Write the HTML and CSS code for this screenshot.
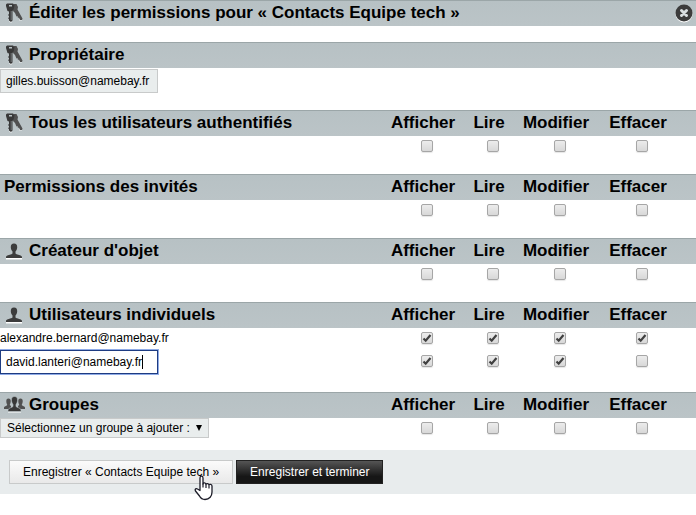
FILE: index.html
```html
<!DOCTYPE html>
<html lang="fr">
<head>
    <meta charset="UTF-8">
    <meta name="viewport" content="width=device-width, initial-scale=1.0">
    <title>Éditer les permissions</title>
    <link rel="stylesheet" href="styles.css">
</head>
<body>
    <!-- Shared icons -->
    <svg class="sprite" aria-hidden="true">
        <symbol id="icon-keys" viewBox="0 0 21 20">
            <path fill="#fff" opacity=".7" d="M5 18h3v1.500H6zM15 16h3v1.500h-3z"/>
            <path fill="#505050" d="M10 1h2.500l1.500 3-.5 2.500 5 9-.5 1.500h-2l-1-2.500-1 .5-.5-2-1 .5-1.500-3.500L9 8z"/>
            <path fill="#383838" fill-rule="evenodd" d="M3 .500h6L10.500 2l-.7 4.500L8.500 8v9.500L7 19l-2-1.500V16l-1-.8 1-1V13l-1-1 1-1V8.500L3.500 8 2 3V1.500zM5 2v1.500h3V2z"/>
            <path stroke="#8f9698" stroke-width=".7" d="M7.200 8v9"/>
        </symbol>
        <symbol id="icon-user" viewBox="0 0 21 20">
            <path fill="#fff" d="M2 17h16v1.500H2z"/>
            <path fill="#3c3c3c" d="M10 2.500c2.400 0 3.300 1.500 3.200 4-.1 2-1 3-1.700 4v2c1 1.200 6.500 1.500 6.500 3.500v1H2v-1c0-2 5.500-2.300 6.500-3.500v-2c-.7-1-1.600-2-1.700-4-.1-2.500.8-4 3.200-4z"/>
        </symbol>
        <symbol id="icon-group" viewBox="0 0 21 20">
            <path fill="#fff" d="M4 16h13v1.500H4z"/>
            <path fill="#505050" d="M4.500 3.500c1.800 0 2.300 1 2.200 3S5.800 9 5.800 10L7 11v3H0v-1.500c0-1.300 2.500-1.500 3.200-2.500 0-1-.9-1.500-.9-3.500s.4-3 2.200-3zM16.500 3.500c1.800 0 2.300 1 2.200 3s-.9 2.500-.9 3.500c.7 1 3.200 1.200 3.200 2.500V14h-7v-3l1.200-1c0-1-.9-1.500-.9-3.500s.4-3 2.200-3z"/>
            <path fill="#383838" stroke="#b9c3c6" stroke-width=".6" d="M10.500 1.500c2.400 0 3.100 1.500 3 4-.1 2-1 3-1.500 4v2c.8 1 5 1.500 5 3.500v1.500H4V15c0-2 4.200-2.500 5-3.500v-2c-.5-1-1.400-2-1.500-4-.1-2.500.6-4 3-4z"/>
        </symbol>
    </svg>

    <form class="permissions" onsubmit="return false">
        <header class="bar title-bar">
            <svg class="icon" aria-hidden="true"><use href="#icon-keys"/></svg>
            <h1>Éditer les permissions pour « Contacts Equipe tech »</h1>
            <button class="close" type="button" aria-label="Fermer">
                <svg viewBox="0 0 18 19" aria-hidden="true">
                    <circle cx="9" cy="10" r="8.500" fill="#fff"/>
                    <circle cx="9" cy="9" r="8.500" fill="#3c3c3c"/>
                    <path d="M6.500 6.500l5 5M11.500 6.500l-5 5" stroke="#d9dfe1" stroke-width="3" stroke-linecap="round"/>
                </svg>
            </button>
        </header>

        <section class="section">
            <div class="bar">
                <svg class="icon" aria-hidden="true"><use href="#icon-keys"/></svg>
                <h2><label for="owner">Propriétaire</label></h2>
            </div>
            <div class="owner-row">
                <input class="text" type="text" id="owner" value="gilles.buisson@namebay.fr">
            </div>
        </section>

        <table class="section">
            <thead>
                <tr>
                    <th class="name"><div class="heading"><svg class="icon" aria-hidden="true"><use href="#icon-keys"/></svg><h2>Tous les utilisateurs authentifiés</h2></div></th>
                    <th class="view">Afficher</th>
                    <th class="read">Lire</th>
                    <th class="edit">Modifier</th>
                    <th class="delete">Effacer</th>
                </tr>
            </thead>
            <tbody>
                <tr>
                    <td class="name"></td>
                    <td><input type="checkbox" aria-label="Afficher"></td>
                    <td><input type="checkbox" aria-label="Lire"></td>
                    <td><input type="checkbox" aria-label="Modifier"></td>
                    <td><input type="checkbox" aria-label="Effacer"></td>
                </tr>
            </tbody>
        </table>

        <table class="section">
            <thead>
                <tr>
                    <th class="name"><div class="heading"><h2>Permissions des invités</h2></div></th>
                    <th class="view">Afficher</th>
                    <th class="read">Lire</th>
                    <th class="edit">Modifier</th>
                    <th class="delete">Effacer</th>
                </tr>
            </thead>
            <tbody>
                <tr>
                    <td class="name"></td>
                    <td><input type="checkbox" aria-label="Afficher"></td>
                    <td><input type="checkbox" aria-label="Lire"></td>
                    <td><input type="checkbox" aria-label="Modifier"></td>
                    <td><input type="checkbox" aria-label="Effacer"></td>
                </tr>
            </tbody>
        </table>

        <table class="section">
            <thead>
                <tr>
                    <th class="name"><div class="heading"><svg class="icon" aria-hidden="true"><use href="#icon-user"/></svg><h2>Créateur d'objet</h2></div></th>
                    <th class="view">Afficher</th>
                    <th class="read">Lire</th>
                    <th class="edit">Modifier</th>
                    <th class="delete">Effacer</th>
                </tr>
            </thead>
            <tbody>
                <tr>
                    <td class="name"></td>
                    <td><input type="checkbox" aria-label="Afficher"></td>
                    <td><input type="checkbox" aria-label="Lire"></td>
                    <td><input type="checkbox" aria-label="Modifier"></td>
                    <td><input type="checkbox" aria-label="Effacer"></td>
                </tr>
            </tbody>
        </table>

        <table class="section">
            <thead>
                <tr>
                    <th class="name"><div class="heading"><svg class="icon" aria-hidden="true"><use href="#icon-user"/></svg><h2>Utilisateurs individuels</h2></div></th>
                    <th class="view">Afficher</th>
                    <th class="read">Lire</th>
                    <th class="edit">Modifier</th>
                    <th class="delete">Effacer</th>
                </tr>
            </thead>
            <tbody>
                <tr>
                    <td class="name">alexandre.bernard@namebay.fr</td>
                    <td><input type="checkbox" aria-label="Afficher" checked></td>
                    <td><input type="checkbox" aria-label="Lire" checked></td>
                    <td><input type="checkbox" aria-label="Modifier" checked></td>
                    <td><input type="checkbox" aria-label="Effacer" checked></td>
                </tr>
                <tr>
                    <td class="name">
                        <div class="field">
                            <input class="text active" type="text" aria-label="Ajouter un utilisateur" value="david.lanteri@namebay.fr">
                            <span class="caret"></span>
                        </div>
                    </td>
                    <td><input type="checkbox" aria-label="Afficher" checked></td>
                    <td><input type="checkbox" aria-label="Lire" checked></td>
                    <td><input type="checkbox" aria-label="Modifier" checked></td>
                    <td><input type="checkbox" aria-label="Effacer"></td>
                </tr>
            </tbody>
        </table>

        <table class="section">
            <thead>
                <tr>
                    <th class="name"><div class="heading"><svg class="icon" aria-hidden="true"><use href="#icon-group"/></svg><h2>Groupes</h2></div></th>
                    <th class="view">Afficher</th>
                    <th class="read">Lire</th>
                    <th class="edit">Modifier</th>
                    <th class="delete">Effacer</th>
                </tr>
            </thead>
            <tbody>
                <tr>
                    <td class="name">
                        <select aria-label="Groupe">
                            <option>Sélectionnez un groupe à ajouter :</option>
                        </select>
                    </td>
                    <td><input type="checkbox" aria-label="Afficher"></td>
                    <td><input type="checkbox" aria-label="Lire"></td>
                    <td><input type="checkbox" aria-label="Modifier"></td>
                    <td><input type="checkbox" aria-label="Effacer"></td>
                </tr>
            </tbody>
        </table>

        <footer class="actions">
            <div class="save-wrap">
                <button class="btn" type="submit">Enregistrer « Contacts Equipe tech »</button>
                <!-- Hand pointer over the button -->
                <svg class="pointer" viewBox="0 0 20 26" aria-hidden="true">
                    <path fill="#fff" stroke="#1c1c28" stroke-width="1.300" stroke-linejoin="round" d="M6 15.500V3C6 .600 9 .600 9 3v6c0-1.500 3-1.500 3 .5 0-1.300 3-1.300 3 .7 0-1.200 3-1.200 3 .8v6c0 4-2.500 7.500-7 7.500-3 0-4.500-1.500-5.500-3.500L1.500 16c-1-2 .8-3 2-2z"/>
                    <path fill="none" stroke="#1c1c28" stroke-width="1.200" d="M9 8.500v4M12 9.500v3.500M15 10.500v3"/>
                </svg>
            </div>
            <button class="btn dark" type="submit">Enregistrer et terminer</button>
        </footer>
    </form>
</body>
</html>
```
FILE: styles.css
```css
* {
    box-sizing: border-box;
}
body {
    min-height: 100vh;
    margin: 0;
    background-color: #fff;
    color: #000;
    font-family: "Liberation Sans", Arial, sans-serif;
    font-size: 12px;
    line-height: 16px;
}
h1, h2 {
    margin: 0;
    font-size: 17px;
    line-height: 20px;
    font-weight: bold;
}
.sprite {
    display: none;
}
.bar,
thead tr {
    height: 26px;
    background: linear-gradient(#9ba6a8 1px, #b7c1c4 1px, #bbc4c7);
}
.bar,
.heading {
    display: flex;
    align-items: center;
    gap: 4px;
    padding: 0 4px;
}
.title-bar {
    margin-bottom: 16px;
}
.section {
    margin-bottom: 18px;
}
.icon {
    flex: none;
    width: 21px;
    height: 20px;
}
.close {
    width: 18px;
    height: 19px;
    margin-left: auto;
    margin-right: -1px;
    padding: 0;
    border: none;
    background: none;
    cursor: pointer;
}
.close svg {
    display: block;
}

/* Permission tables */
table {
    width: 100%;
    table-layout: fixed;
    border-collapse: collapse;
}
th {
    padding: 0 8px 0 0;
    font-size: 17px;
    line-height: 20px;
    text-align: center;
}
td {
    height: 20px;
    padding: 0;
    text-align: center;
    vertical-align: middle;
}
.name {
    padding: 0;
    text-align: left;
}
.view {
    width: 74px;
}
.read {
    width: 58px;
}
.edit {
    width: 76px;
}
.delete {
    width: 98px;
}
th:last-child {
    padding-right: 18px;
}
td:last-child {
    padding-right: 10px;
}

/* Controls */
input[type="checkbox"] {
    appearance: none;
    display: block;
    width: 12px;
    height: 12px;
    margin: 0 auto;
    border: 1px solid #a6a6a6;
    border-radius: 2px;
    background: linear-gradient(#ececec, #d8d8d8);
    box-shadow: 0 1px 1px rgba(0, 0, 0, 0.1);
}
input[type="checkbox"]:checked {
    background: url("data:image/svg+xml,%3Csvg xmlns='http://www.w3.org/2000/svg' viewBox='0 0 10 10'%3E%3Cpath d='M1.500 5.500l2.200 2.200L8.500 2' fill='none' stroke='%23404040' stroke-width='2.200'/%3E%3C/svg%3E") center / 10px 10px no-repeat, linear-gradient(#ececec, #d8d8d8);
}
.text {
    display: block;
    width: 158px;
    height: 24px;
    padding: 0 5px;
    border: 1px solid #c8caca;
    background-color: #e9eded;
    color: #000;
    font: inherit;
}
.text.active {
    border-color: #1e3c82;
    background-color: #fff;
    box-shadow: 0 0 0 1px #8fabe6;
}
.owner-row {
    height: 24px;
    padding-top: 1px;
}
.field {
    position: relative;
    width: 158px;
    padding-top: 2px;
}
.caret {
    position: absolute;
    top: 7px;
    left: 142px;
    width: 1px;
    height: 14px;
    background-color: #000;
}
select {
    appearance: none;
    display: block;
    height: 20px;
    padding: 0 18px 0 6px;
    border: 1px solid #c8caca;
    border-radius: 0;
    background: #e9eded url("data:image/svg+xml,%3Csvg xmlns='http://www.w3.org/2000/svg' viewBox='0 0 7 7'%3E%3Cpath d='M0 0h7L3.500 7z'/%3E%3C/svg%3E") right 6px center / 6px 6px no-repeat;
    color: #000;
    font: inherit;
}

/* Footer buttons */
.actions {
    display: flex;
    gap: 3px;
    margin-top: -6px;
    padding: 10px 9px;
    background-color: #e8eced;
}
.save-wrap {
    position: relative;
}
.btn {
    height: 24px;
    padding: 0 13px;
    border: 1px solid #c8caca;
    background: linear-gradient(#fbfbfb, #e9e9e9);
    color: #000;
    font: inherit;
    cursor: pointer;
}
.btn.dark {
    border-color: #222;
    background: linear-gradient(#555, #161616 70%);
    color: #fff;
}
.pointer {
    position: absolute;
    top: 15px;
    left: 185px;
    width: 20px;
    height: 26px;
}
```
